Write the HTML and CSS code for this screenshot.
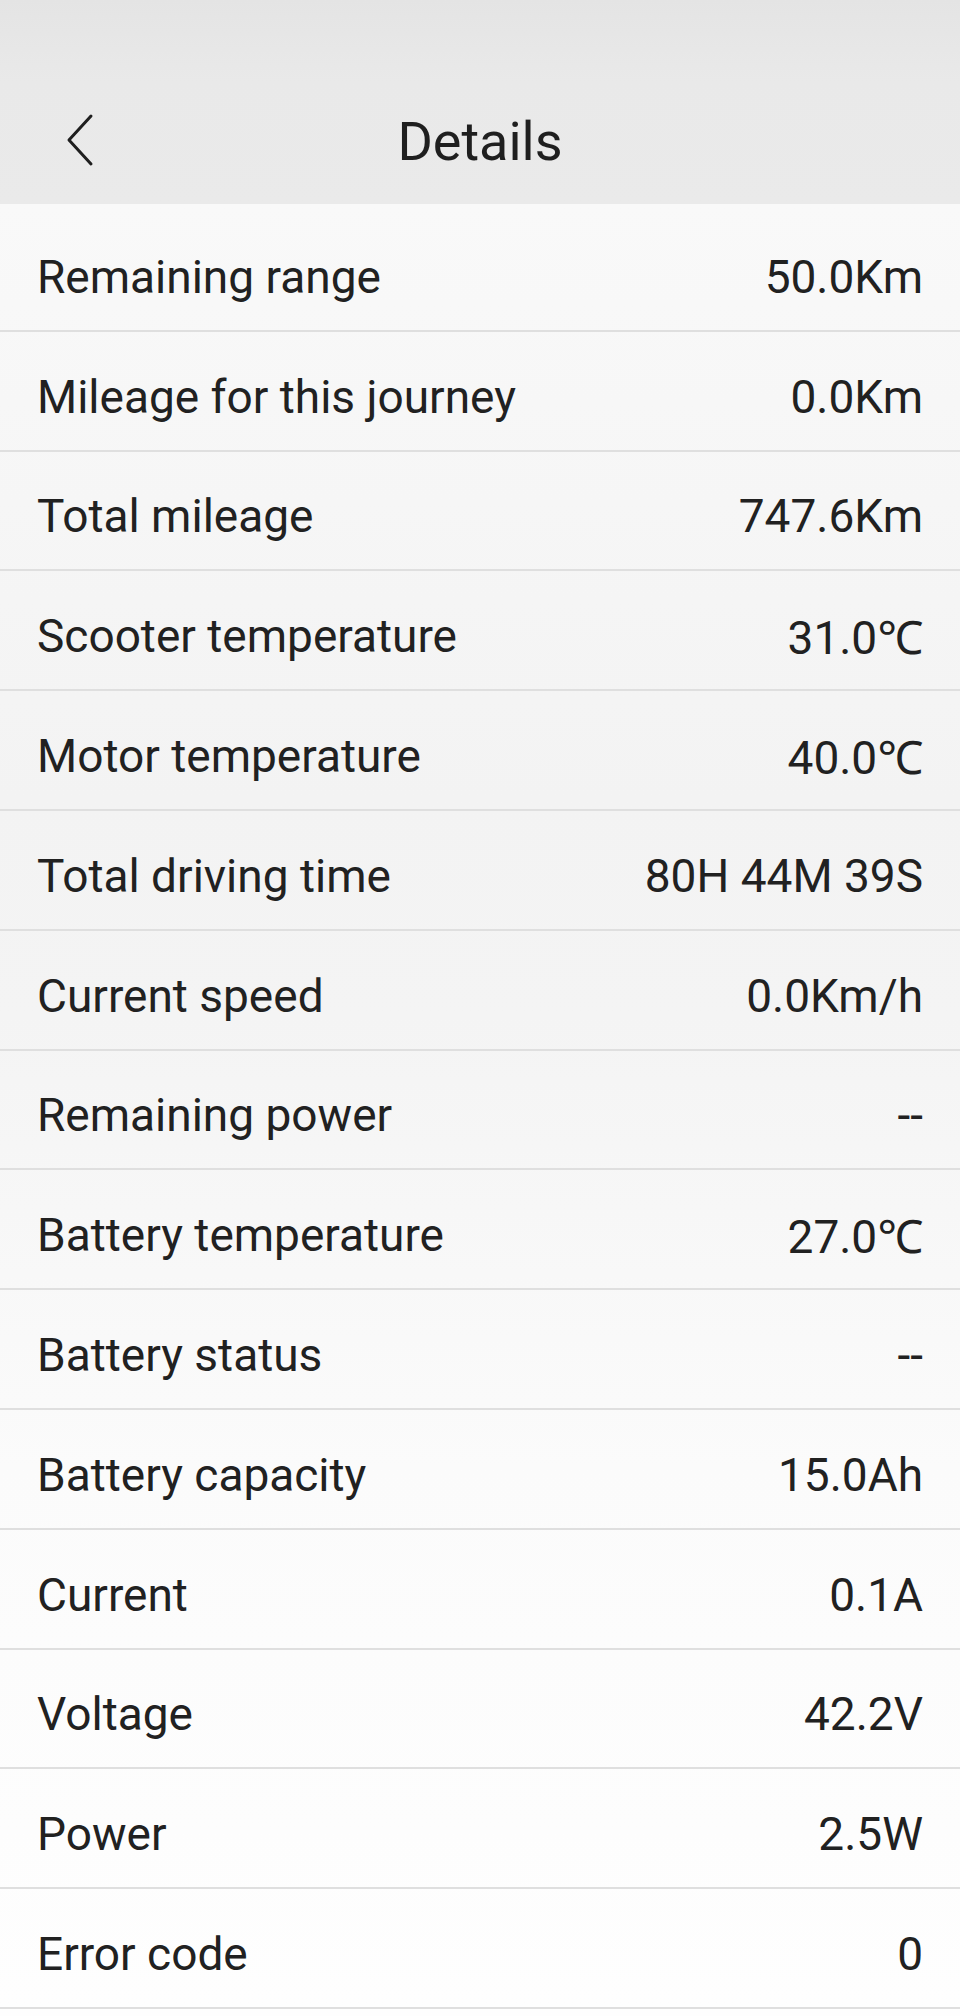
FILE: index.html
```html
<!DOCTYPE html>
<html lang="en">
<head>
  <meta charset="UTF-8">
  <meta name="viewport" content="width=device-width, initial-scale=1.0">
  <title>Details</title>
  <link rel="stylesheet" href="styles.css">
</head>
<body>
  <div class="header">
    <div class="status-bar"></div>
    <div class="nav">
      <span class="back">
        <svg width="30" height="56" viewBox="0 0 30 56">
          <polyline points="25,4 3,28 25,52" fill="none" stroke="#1f1f1f" stroke-width="3" stroke-linecap="round" stroke-linejoin="round"/>
        </svg>
      </span>
      <h1 class="title">Details</h1>
      <span></span>
    </div>
  </div>

  <div class="list">
    <div class="row"><span>Remaining range</span><span>50.0Km</span></div>
    <div class="row"><span>Mileage for this journey</span><span>0.0Km</span></div>
    <div class="row"><span>Total mileage</span><span>747.6Km</span></div>
    <div class="row"><span>Scooter temperature</span><span>31.0℃</span></div>
    <div class="row"><span>Motor temperature</span><span>40.0℃</span></div>
    <div class="row"><span>Total driving time</span><span>80H 44M 39S</span></div>
    <div class="row"><span>Current speed</span><span>0.0Km/h</span></div>
    <div class="row"><span>Remaining power</span><span>--</span></div>
    <div class="row"><span>Battery temperature</span><span>27.0℃</span></div>
    <div class="row"><span>Battery status</span><span>--</span></div>
    <div class="row"><span>Battery capacity</span><span>15.0Ah</span></div>
    <div class="row"><span>Current</span><span>0.1A</span></div>
    <div class="row"><span>Voltage</span><span>42.2V</span></div>
    <div class="row"><span>Power</span><span>2.5W</span></div>
    <div class="row"><span>Error code</span><span>0</span></div>
  </div>
</body>
</html>
```

FILE: styles.css
```css
* {
  margin: 0;
  padding: 0;
  box-sizing: border-box;
  font-family: Roboto, "Noto Sans", sans-serif;
}

body {
  background: #fefefe;
  color: #212121;
}

.header {
  height: 204px;
  background: linear-gradient(#e4e4e4, #e9e9e9 40%, #eaeaea);
}

.status-bar {
  height: 79px;
}

.nav {
  height: 125px;
  display: grid;
  grid-template-columns: 1fr auto 1fr;
  align-items: center;
}

.nav .back {
  display: flex;
  align-items: center;
  padding-left: 66px;
  margin-top: -3px;
}

.nav .title {
  font-size: 54px;
  font-weight: 400;
  color: #1f1f1f;
}

.list {
  padding-top: 8px;
  background: linear-gradient(#f9f9f9, #f3f3f3 33%, #f4f4f4 45%, #fbfbfb 70%, #fefefe);
}

.list .row {
  height: 119.8px;
  padding: 12px 37px 0 37px;
  display: flex;
  justify-content: space-between;
  align-items: center;
  font-size: 46px;
  border-bottom: 2.4px solid #dfdfdf;
}
```
